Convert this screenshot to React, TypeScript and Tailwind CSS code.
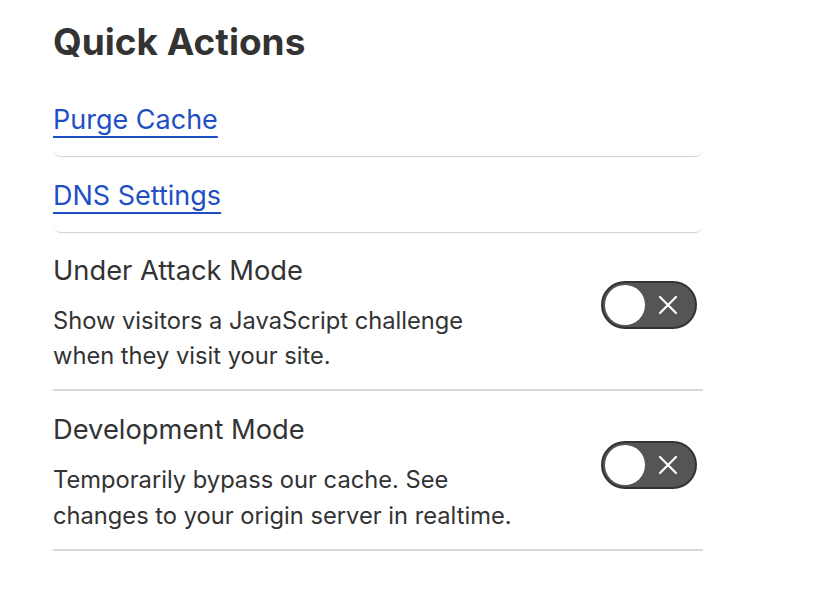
import React from "react";

function Toggle() {
  return (
    <div className="relative flex h-[48px] w-[96px] shrink-0 items-center rounded-full border-2 border-[#333] bg-[#555]">
      <div className="ml-[2px] h-[40px] w-[40px] rounded-full bg-white" />
      <svg className="absolute right-[16px] top-1/2 -translate-y-1/2" width="22" height="22" viewBox="0 0 22 22">
        <path d="M3 3 L19 19 M19 3 L3 19" stroke="white" strokeWidth="2.2" strokeLinecap="round" />
      </svg>
    </div>
  );
}

function LinkCard({ label }: { label: string }) {
  return (
    <div className="rounded-lg pt-[12px] pb-[20px] shadow-[0_2px_1px_-1px_rgba(0,0,0,0.18)]">
      <a href="#" className="text-[27px] leading-[32px] text-[#1f4fc5] underline decoration-2 underline-offset-[7px]">
        {label}
      </a>
    </div>
  );
}

function SettingRow({ title, desc }: { title: string; desc: React.ReactNode }) {
  return (
    <div className="flex items-center justify-between border-b-2 border-[#d9d9d9] pt-[23px] pb-[16px]">
      <div>
        <div className="text-[27.3px] leading-[32px] text-[#333]">{title}</div>
        <div className="mt-[16px] text-[23.7px] leading-[35.2px] text-[#333]">{desc}</div>
      </div>
      <div className="mr-[6px] mb-[18px]">
        <Toggle />
      </div>
    </div>
  );
}

export default function App() {
  return (
    <div className="min-h-[604px] w-[816px] bg-white" style={{ fontFamily: "Inter, 'Noto Sans', sans-serif" }}>
      <div className="w-[650px] ml-[53px] pt-[18px]">
        <h1 className="text-[37px] font-bold leading-[48px] text-[#333]">Quick Actions</h1>
        <div className="mt-[26px]">
          <LinkCard label="Purge Cache" />
          <div className="mt-[12px]">
            <LinkCard label="DNS Settings" />
          </div>
        </div>
        <SettingRow
          title="Under Attack Mode"
          desc={<>Show visitors a JavaScript challenge<br />when they visit your site.</>}
        />
        <SettingRow
          title="Development Mode"
          desc={<>Temporarily bypass our cache. See<br />changes to your origin server in realtime.</>}
        />
      </div>
    </div>
  );
}
